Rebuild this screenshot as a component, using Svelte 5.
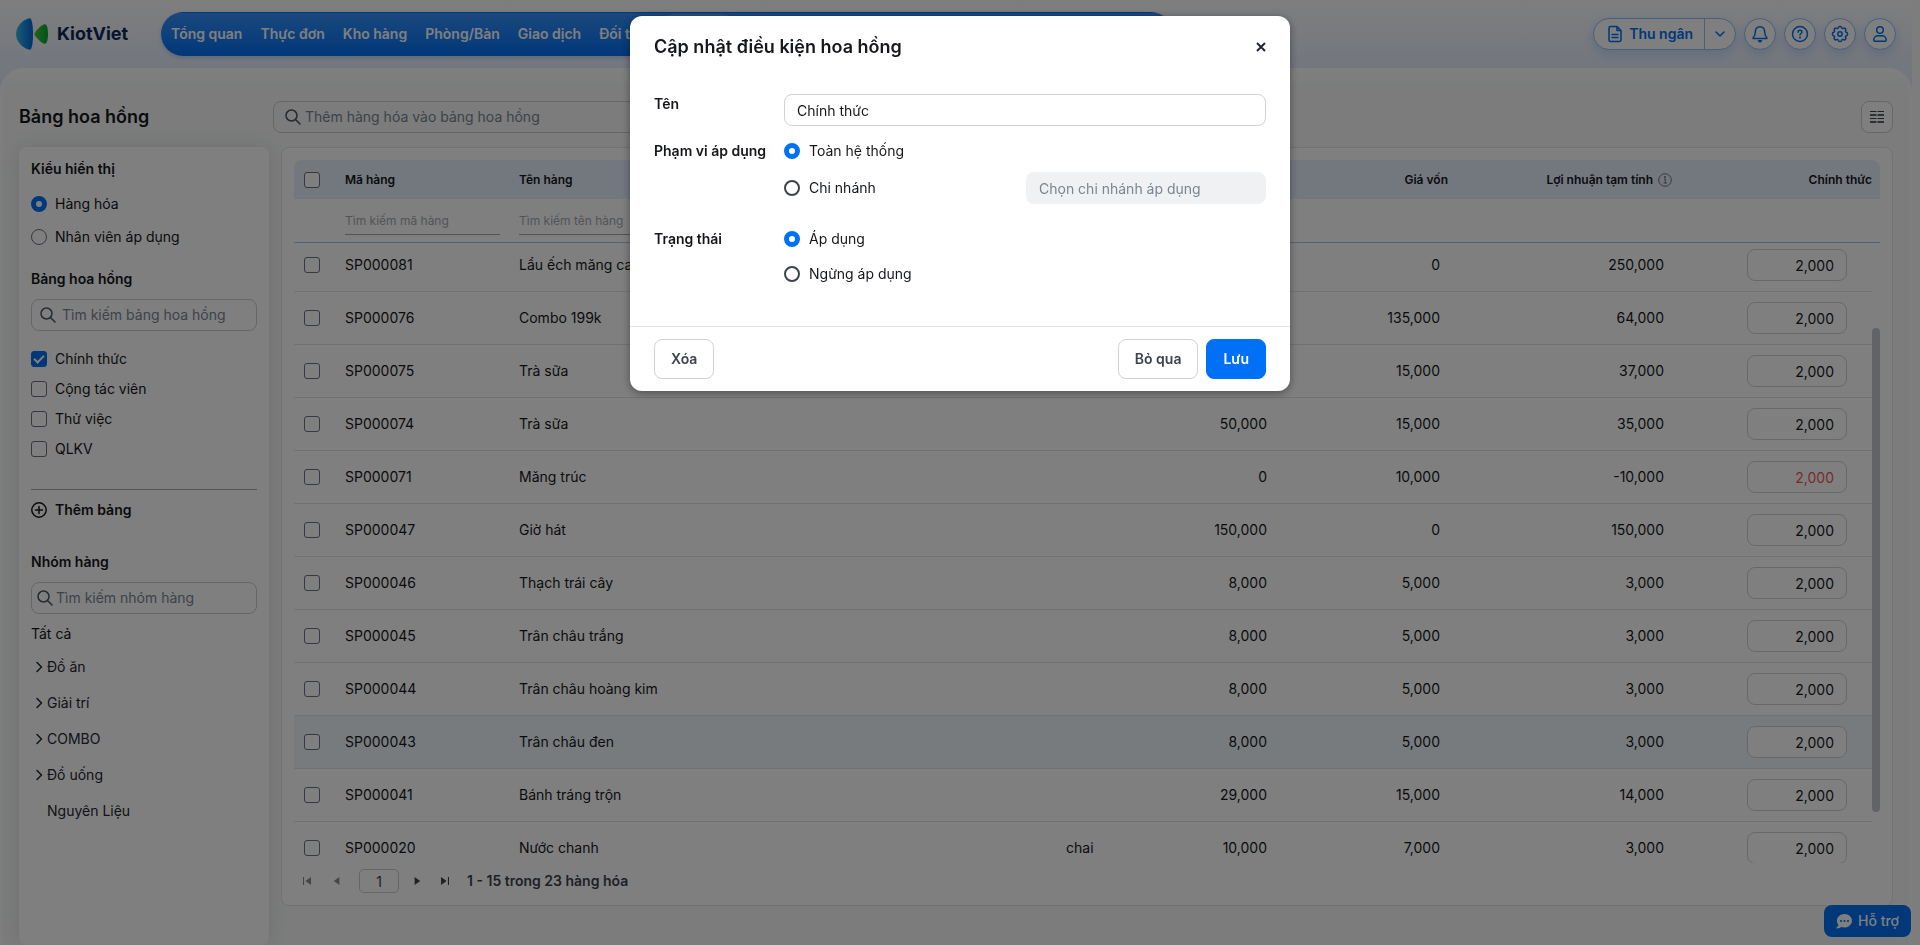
<script>
  let view = "product";
  let name = "Chính thức";
  let scope = "all";
  let status = "active";

  const menu = ["Tổng quan", "Thực đơn", "Kho hàng", "Phòng/Bàn", "Giao dịch", "Đối tác", "Nhân viên"];
  const current = "Nhân viên";

  let boards = [
    { name: "Chính thức", checked: true },
    { name: "Cộng tác viên", checked: false },
    { name: "Thử việc", checked: false },
    { name: "QLKV", checked: false },
  ];

  const groups = [
    { name: "Đồ ăn", nested: true },
    { name: "Giải trí", nested: true },
    { name: "COMBO", nested: true },
    { name: "Đồ uống", nested: true },
    { name: "Nguyên Liệu", nested: false },
  ];

  const products = [
    { code: "SP000081", name: "Lẩu ếch măng cay", unit: "", price: 250000, cost: 0 },
    { code: "SP000076", name: "Combo 199k", unit: "", price: 199000, cost: 135000 },
    { code: "SP000075", name: "Trà sữa", unit: "", price: 52000, cost: 15000 },
    { code: "SP000074", name: "Trà sữa", unit: "", price: 50000, cost: 15000 },
    { code: "SP000071", name: "Măng trúc", unit: "", price: 0, cost: 10000 },
    { code: "SP000047", name: "Giờ hát", unit: "", price: 150000, cost: 0 },
    { code: "SP000046", name: "Thạch trái cây", unit: "", price: 8000, cost: 5000 },
    { code: "SP000045", name: "Trân châu trắng", unit: "", price: 8000, cost: 5000 },
    { code: "SP000044", name: "Trân châu hoàng kim", unit: "", price: 8000, cost: 5000 },
    { code: "SP000043", name: "Trân châu đen", unit: "", price: 8000, cost: 5000 },
    { code: "SP000041", name: "Bánh tráng trộn", unit: "", price: 29000, cost: 15000 },
    { code: "SP000020", name: "Nước chanh", unit: "chai", price: 10000, cost: 7000 },
  ];
  const hovered = "SP000043";

  const money = (n) => n.toLocaleString("en-US");
</script>

<div class="page">
  <header>
    <a class="logo" href="#home">
      <svg width="32" height="32" viewBox="0 0 32 32" aria-hidden="true">
        <defs>
          <linearGradient id="blue" x1="0" x2="1" y1="0" y2="0">
            <stop offset="0" stop-color="#35b8e8" />
            <stop offset="1" stop-color="#0066dd" />
          </linearGradient>
          <linearGradient id="green" x1="0" x2="1" y1="0" y2="0">
            <stop offset="0" stop-color="#4fc52c" />
            <stop offset="1" stop-color="#00a53c" />
          </linearGradient>
        </defs>
        <path d="M14 0.2C15.6 0.4 17 6 17 16s-1.400 15.600-3 15.800C8 31 0 24.500 0 16S8 1 14 .2z" fill="url(#blue)" />
        <path d="M18.800 14.800C21 11.500 25 7.500 28.500 6.300 31 5.600 32 11 32 16s-1 10.400-3.500 9.700C25 24.500 21 20.500 18.800 17.200a2 2 0 0 1 0-2.400z" fill="url(#green)" />
      </svg>
      <span>KiotViet</span>
    </a>

    <nav>
      {#each menu as item}
        <a href="#menu" class:active={item === current}>{item}</a>
      {/each}
    </nav>

    <div class="actions">
      <div class="cashier">
        <button class="cashier-main">
          <svg width="16" height="18" viewBox="0 0 16 18" class="line" aria-hidden="true">
            <path d="M10 1.500H3.500A1.500 1.500 0 0 0 2 3v12a1.500 1.500 0 0 0 1.500 1.500h9A1.500 1.500 0 0 0 14 15V5.500zM10 1.500v4h4M5 9.500h6M5 12.500h6" />
          </svg>
          Thu ngân
        </button>
        <button class="cashier-more" aria-label="Mở thêm">
          <svg width="12" height="12" viewBox="0 0 12 12" class="line" aria-hidden="true"><path d="M2 4l4 4 4-4" /></svg>
        </button>
      </div>
      <button class="round" aria-label="Thông báo">
        <svg width="18" height="18" viewBox="0 0 18 18" class="line" aria-hidden="true">
          <path d="M9 1.700c-2.900 0-4.600 2.100-4.600 4.600 0 3.700-1 5.200-2.200 6.400-.3.400 0 .9.500.9h12.600c.5 0 .8-.5.500-.9-1.200-1.200-2.200-2.700-2.200-6.400C13.600 3.800 11.900 1.700 9 1.700z" />
          <path d="M7.500 15.800h3L9 16.800z" />
        </svg>
      </button>
      <button class="round" aria-label="Trợ giúp">
        <svg width="18" height="18" viewBox="0 0 18 18" class="line" aria-hidden="true">
          <circle cx="9" cy="9" r="7.500" />
          <path d="M7 7.200c0-1.200.9-2 2-2s2 .8 2 1.800c0 1.500-2 1.500-2 3" />
          <circle cx="9" cy="12.600" r=".4" />
        </svg>
      </button>
      <button class="round" aria-label="Thiết lập">
        <svg width="18" height="18" viewBox="0 0 18 18" class="line" aria-hidden="true">
          <path d="M7.300 2.600c.2-.7.7-1.100 1.300-1.100h.8c.6 0 1.100.4 1.300 1.100.2.800 1.100 1.200 1.800.8.600-.4 1.300-.3 1.700.1l.3.300c.4.400.5 1.100.1 1.700-.4.700 0 1.600.8 1.800.7.200 1.100.7 1.100 1.300v.8c0 .6-.4 1.100-1.100 1.300-.8.200-1.200 1.100-.8 1.800.4.600.3 1.300-.1 1.700l-.3.300c-.4.400-1.100.5-1.700.1-.7-.4-1.600 0-1.800.8-.2.700-.7 1.100-1.300 1.100h-.8c-.6 0-1.100-.4-1.300-1.100-.2-.8-1.100-1.200-1.800-.8-.6.400-1.300.3-1.700-.1l-.3-.3c-.4-.4-.5-1.100-.1-1.700.4-.7 0-1.600-.8-1.800-.7-.2-1.100-.7-1.100-1.300v-.8c0-.6.4-1.100 1.100-1.300.8-.2 1.200-1.100.8-1.800-.4-.6-.3-1.300.1-1.700l.3-.3c.4-.4 1.100-.5 1.700-.1.700.4 1.600 0 1.800-.8z" />
          <circle cx="9" cy="9" r="2.200" />
        </svg>
      </button>
      <button class="round" aria-label="Tài khoản">
        <svg width="18" height="18" viewBox="0 0 18 18" class="line" aria-hidden="true">
          <circle cx="9" cy="5" r="3.300" />
          <path d="M2.800 15c0-2.800 2.200-4.200 4.200-4.200h4c2 0 4.200 1.400 4.200 4.200 0 .8-.5 1.200-1.200 1.200H4c-.7 0-1.200-.4-1.200-1.200z" />
        </svg>
      </button>
    </div>
  </header>

  <main>
    <div class="toolbar">
      <h1>Bảng hoa hồng</h1>
      <div class="field search-product">
        <svg width="16" height="16" viewBox="0 0 16 16" class="line" aria-hidden="true"><circle cx="6.500" cy="6.500" r="5.500" /><path d="M10.500 10.500L15 15" /></svg>
        <input type="text" placeholder="Thêm hàng hóa vào bảng hoa hồng" aria-label="Thêm hàng hóa" />
      </div>
      <button class="columns" aria-label="Chọn cột">
        <svg width="16" height="14" viewBox="0 0 16 14" aria-hidden="true">
          <path d="M1 1.500h6.500M8.500 1.500H15M1 8.500h6.500M8.500 8.500H15" stroke="#3d434d" stroke-width="1.200" />
          <path d="M1 5h6.500M8.500 5H15M1 12h6.500M8.500 12H15" stroke="#5c626c" stroke-width="2" />
        </svg>
      </button>
    </div>

    <div class="content">
      <aside>
        <h2>Kiểu hiển thị</h2>
        <div class="views">
          <label><input type="radio" name="view" value="product" bind:group={view} />Hàng hóa</label>
          <label><input type="radio" name="view" value="staff" bind:group={view} />Nhân viên áp dụng</label>
        </div>

        <h2>Bảng hoa hồng</h2>
        <div class="field board-search">
          <svg width="16" height="16" viewBox="0 0 16 16" class="line" aria-hidden="true"><circle cx="6.500" cy="6.500" r="5.500" /><path d="M10.500 10.500L15 15" /></svg>
          <input type="text" placeholder="Tìm kiếm bảng hoa hồng" aria-label="Tìm kiếm bảng hoa hồng" />
        </div>
        <div class="boards">
          {#each boards as board}
            <label><input type="checkbox" bind:checked={board.checked} />{board.name}</label>
          {/each}
        </div>
        <button class="add">
          <svg width="16" height="16" viewBox="0 0 16 16" class="line" aria-hidden="true"><circle cx="8" cy="8" r="7.200" /><path d="M8 4.500v7M4.500 8h7" /></svg>
          Thêm bảng
        </button>

        <h2>Nhóm hàng</h2>
        <div class="field group-search">
          <svg width="16" height="16" viewBox="0 0 16 16" class="line" aria-hidden="true"><circle cx="6.500" cy="6.500" r="5.500" /><path d="M10.500 10.500L15 15" /></svg>
          <input type="text" placeholder="Tìm kiếm nhóm hàng" aria-label="Tìm kiếm nhóm hàng" />
        </div>
        <a class="all" href="#all">Tất cả</a>
        <ul>
          {#each groups as group}
            <li>
              {#if group.nested}
                <svg width="8" height="12" viewBox="0 0 8 12" class="line" aria-hidden="true"><path d="M2 1.500L6.500 6 2 10.500" /></svg>
              {/if}
              <a href="#group">{group.name}</a>
            </li>
          {/each}
        </ul>
      </aside>

      <section>
        <table class="head">
          <colgroup>
            <col class="c-check" /><col class="c-code" /><col /><col class="c-unit" /><col class="c-price" /><col class="c-cost" /><col class="c-profit" /><col class="c-rate" />
          </colgroup>
          <thead>
            <tr>
              <th class="check"><input type="checkbox" aria-label="Chọn tất cả" /></th>
              <th>Mã hàng</th>
              <th>Tên hàng</th>
              <th>ĐVT</th>
              <th class="num">Giá bán</th>
              <th class="num">Giá vốn</th>
              <th class="num">
                <span class="with-info">
                  Lợi nhuận tạm tính
                  <svg width="14" height="14" viewBox="0 0 14 14" aria-hidden="true">
                    <circle cx="7" cy="7" r="6.300" fill="none" stroke="#6b7280" />
                    <path d="M6 6h1.300v4M5.500 10h3.500M6.500 3.500h1v1h-1z" fill="none" stroke="#6b7280" />
                  </svg>
                </span>
              </th>
              <th class="num">Chính thức</th>
            </tr>
            <tr class="filters">
              <td></td>
              <td><input type="text" placeholder="Tìm kiếm mã hàng" aria-label="Tìm kiếm mã hàng" /></td>
              <td><input type="text" placeholder="Tìm kiếm tên hàng" aria-label="Tìm kiếm tên hàng" /></td>
              <td colspan="5"></td>
            </tr>
          </thead>
        </table>

        <div class="scroller">
          <div class="viewport">
            <table class="rows">
              <colgroup>
                <col class="c-check" /><col class="c-code" /><col /><col class="c-unit" /><col class="c-price" /><col class="c-cost" /><col class="c-profit" /><col class="c-rate-body" />
              </colgroup>
              <tbody>
                {#each products as p}
                  <tr class:hovered={p.code === hovered}>
                    <td class="check"><input type="checkbox" aria-label={p.code} /></td>
                    <td>{p.code}</td>
                    <td>{p.name}</td>
                    <td>{p.unit}</td>
                    <td class="num">{money(p.price)}</td>
                    <td class="num">{money(p.cost)}</td>
                    <td class="num">{money(p.price - p.cost)}</td>
                    <td class="rate"><input type="text" class:loss={p.price < p.cost} value="2,000" aria-label="Hoa hồng {p.code}" /></td>
                  </tr>
                {/each}
              </tbody>
            </table>
          </div>
          <div class="track"><div class="thumb"></div></div>
        </div>

        <div class="pager">
          <button disabled aria-label="Trang đầu"><svg width="8" height="8" viewBox="0 0 10 10"><path d="M0 0h1.300v10H0zM10 0v10L3 5z" /></svg></button>
          <button disabled aria-label="Trang trước"><svg width="8" height="8" viewBox="0 0 10 10"><path d="M8 0v10L1 5z" /></svg></button>
          <input type="text" value="1" aria-label="Trang" />
          <button aria-label="Trang sau"><svg width="8" height="8" viewBox="0 0 10 10"><path d="M2 0v10l7-5z" /></svg></button>
          <button aria-label="Trang cuối"><svg width="8" height="8" viewBox="0 0 10 10"><path d="M8.700 0H10v10H8.700zM0 0v10l7-5z" /></svg></button>
          <span>1 - 15 trong 23 hàng hóa</span>
        </div>
      </section>
    </div>
  </main>
</div>

<button class="support">
  <svg width="16" height="15" viewBox="0 0 16 15" aria-hidden="true">
    <path d="M8.300 0C4.200 0 .9 3 .9 6.700c0 1.700.7 3.200 1.700 4.400L0 14.300c2 .3 4-.2 5.200-1.300 1 .3 2 .5 3.100.5 4.200 0 7.700-3 7.700-6.800S12.500 0 8.300 0z" fill="#fff" />
    <g fill="#0070f4"><circle cx="5" cy="7" r="1.100" /><circle cx="8.500" cy="7" r="1.100" /><circle cx="12" cy="7" r="1.100" /></g>
  </svg>
  Hỗ trợ
</button>

<div class="overlay">
  <div class="modal" role="dialog" aria-modal="true" aria-labelledby="modal-title">
    <div class="modal-head">
      <h3 id="modal-title">Cập nhật điều kiện hoa hồng</h3>
      <button aria-label="Đóng">
        <svg width="10" height="10" viewBox="0 0 10 10" aria-hidden="true"><path d="M1 1l8 8M9 1L1 9" stroke="#22272f" stroke-width="2" /></svg>
      </button>
    </div>

    <div class="form">
      <div class="form-row">
        <label class="caption" for="board-name">Tên</label>
        <input id="board-name" type="text" bind:value={name} />
      </div>
      <div class="form-row scope" role="radiogroup" aria-labelledby="scope-label">
        <span class="caption" id="scope-label">Phạm vi áp dụng</span>
        <div class="options">
          <label><input type="radio" name="scope" value="all" bind:group={scope} />Toàn hệ thống</label>
          <div class="branch">
            <label><input type="radio" name="scope" value="branch" bind:group={scope} />Chi nhánh</label>
            <input type="text" placeholder="Chọn chi nhánh áp dụng" aria-label="Chi nhánh áp dụng" disabled={scope === "all"} />
          </div>
        </div>
      </div>
      <div class="form-row status" role="radiogroup" aria-labelledby="status-label">
        <span class="caption" id="status-label">Trạng thái</span>
        <div class="options">
          <label><input type="radio" name="status" value="active" bind:group={status} />Áp dụng</label>
          <label><input type="radio" name="status" value="stopped" bind:group={status} />Ngừng áp dụng</label>
        </div>
      </div>
    </div>

    <div class="modal-foot">
      <button>Xóa</button>
      <div>
        <button>Bỏ qua</button>
        <button class="primary">Lưu</button>
      </div>
    </div>
  </div>
</div>

<style>
  :global(body) {
    background: #f8faf8;
    color: #15171a;
    font: 14px/20px Inter, sans-serif;
    overflow: hidden;
  }
  :global(*) {
    box-sizing: border-box;
  }
  button,
  input {
    font: inherit;
    color: inherit;
  }
  button {
    cursor: pointer;
    padding: 0;
    border: 0;
    background: none;
    display: flex;
    align-items: center;
    justify-content: center;
  }
  a {
    color: inherit;
    text-decoration: none;
  }
  h1,
  h2,
  h3,
  ul {
    margin: 0;
    padding: 0;
  }
  .line {
    fill: none;
    stroke: currentColor;
    stroke-width: 1.5;
    stroke-linecap: round;
    stroke-linejoin: round;
    flex: none;
  }

  .page {
    height: 100vh;
    margin-right: 8px;
    display: flex;
    flex-direction: column;
    background: linear-gradient(#fdfdfd, #e6eefc 68px, #e2ecfc 92px);
  }

  header {
    height: 68px;
    flex: none;
    display: flex;
    align-items: center;
    padding: 0 16px;
  }
  .logo {
    width: 145px;
    display: flex;
    align-items: center;
    gap: 9px;
    font-size: 18px;
    font-weight: 700;
    color: #0a2a5c;
  }
  nav {
    height: 44px;
    width: 1012px;
    display: flex;
    align-items: center;
    padding: 0 1px;
    border-radius: 22px;
    background: linear-gradient(#0070f4 1px, #3690fa 1px, #0070f4);
    color: #fff;
    font-weight: 600;
    box-shadow: 0 2px 4px rgba(0, 80, 180, 0.2);
  }
  nav a {
    padding: 10px 9px;
    border-radius: 20px;
    white-space: nowrap;
  }
  nav .active {
    background: rgba(255, 255, 255, 0.15);
  }

  .actions {
    margin-left: auto;
    display: flex;
    gap: 8px;
    color: #0070f4;
  }
  .cashier,
  .round {
    height: 32px;
    border: 1px solid #8fc0fb;
    border-radius: 16px;
    background: #fff;
    box-shadow: 0 4px 12px rgba(0, 112, 244, 0.2);
  }
  .cashier {
    display: flex;
    font-weight: 600;
  }
  .cashier-main {
    gap: 6px;
    padding: 0 11px 0 13px;
  }
  .cashier-more {
    width: 31px;
    border-left: 1px solid #8fc0fb;
  }
  .round {
    width: 32px;
  }

  main {
    flex: 1;
    min-height: 0;
    display: flex;
    flex-direction: column;
    padding: 33px 16px 0;
    border: solid #fcfcfc;
    border-width: 0 3px;
    border-radius: 24px 24px 0 0;
    background: linear-gradient(#fff, #f6f9f7 20px);
  }
  .toolbar {
    display: flex;
    align-items: center;
    margin-bottom: 14px;
  }
  h1 {
    width: 254px;
    font-size: 18px;
    line-height: 24px;
    font-weight: 600;
  }
  .field {
    height: 32px;
    display: flex;
    align-items: center;
    border: 1px solid #c9ccd1;
    border-radius: 8px;
    background: #fff;
    color: #4b5563;
  }
  .field input {
    flex: 1;
    min-width: 0;
    border: 0;
    padding: 0;
    background: none;
  }
  input::placeholder {
    color: #7b8594;
    opacity: 1;
  }
  .search-product {
    width: 500px;
    padding: 0 11px;
    gap: 4px;
    background: none;
  }
  .columns {
    width: 32px;
    height: 32px;
    margin-left: auto;
    border: 1px solid #c9ccd1;
    border-radius: 8px;
    background: #fff;
  }

  .content {
    flex: 1;
    min-height: 0;
    display: flex;
    gap: 12px;
  }
  aside {
    width: 250px;
    flex: none;
    padding: 12px;
    border-radius: 8px;
    background: #fff;
    box-shadow: 0 0 20px rgba(0, 0, 0, 0.1);
  }
  h2 {
    font-size: 14px;
    line-height: 20px;
    font-weight: 600;
  }
  label {
    display: flex;
    align-items: center;
    gap: 8px;
  }

  input[type="radio"],
  input[type="checkbox"] {
    appearance: none;
    flex: none;
    width: 16px;
    height: 16px;
    margin: 0;
    border: 1px solid #6b7280;
    background: #fff;
  }
  input[type="radio"] {
    border-radius: 50%;
  }
  input[type="radio"]:checked {
    border: 5px solid #0070f4;
  }
  input[type="checkbox"] {
    border-radius: 3px;
  }
  input[type="checkbox"]:checked {
    border-color: #0070f4;
    background: #0070f4;
    display: grid;
    place-items: center;
  }
  input[type="checkbox"]:checked::before {
    content: "";
    width: 8px;
    height: 4px;
    border: solid #fff;
    border-width: 0 0 2px 2px;
    transform: translateY(-1px) rotate(-45deg);
  }

  .views {
    display: grid;
    gap: 13px;
    padding: 15px 0 22px;
  }
  .board-search {
    margin: 10px 0 18px;
    padding: 0 8px;
    gap: 6px;
  }
  .boards {
    display: grid;
    gap: 10px;
    padding-bottom: 30px;
    border-bottom: 1px solid #a5a8ad;
  }
  .add {
    gap: 8px;
    margin: 10px 0 32px;
    font-weight: 600;
  }
  .group-search {
    margin: 10px 0;
    padding: 0 5px;
    gap: 3px;
  }
  .all {
    display: block;
    margin-bottom: 5px;
  }
  li {
    height: 36px;
    display: flex;
    align-items: center;
    padding-left: 4px;
    color: #22272f;
  }
  li a {
    margin-left: auto;
    width: 210px;
  }

  section {
    flex: 1;
    min-width: 0;
    display: flex;
    flex-direction: column;
    margin-bottom: 39px;
    padding: 12px;
    border: 1px solid #e2e4e8;
    border-radius: 8px;
    background: #fff;
  }
  table {
    width: 100%;
    table-layout: fixed;
    border-collapse: separate;
    border-spacing: 0;
  }
  .c-check {
    width: 43px;
  }
  .c-code {
    width: 174px;
  }
  .c-unit {
    width: 50px;
  }
  .c-price {
    width: 175px;
  }
  .c-cost {
    width: 173px;
  }
  .c-profit {
    width: 224px;
  }
  .c-rate {
    width: 200px;
  }
  .c-rate-body {
    width: 192px;
  }
  th,
  td {
    padding: 0 8px;
    text-align: left;
    white-space: nowrap;
  }
  .num {
    text-align: right;
  }
  .check {
    padding: 0 0 0 10px;
  }
  .check input {
    display: block;
  }
  .head {
    border-bottom: 1px solid #a9c8f5;
  }
  th {
    height: 39px;
    font-size: 12px;
    font-weight: 600;
    background: #e6f0ff;
  }
  th:first-child {
    border-top-left-radius: 8px;
  }
  th:last-child {
    border-top-right-radius: 8px;
  }
  .with-info {
    display: inline-flex;
    align-items: center;
    gap: 5px;
  }
  .filters td {
    height: 43px;
    padding-right: 11px;
    font-size: 12px;
  }
  .filters input {
    width: 100%;
    height: 28px;
    border: 0;
    border-bottom: 1px solid #a5a8ad;
    padding: 0;
    background: none;
  }
  .filters input::placeholder {
    color: #a5a8ad;
  }

  .scroller {
    flex: 1;
    min-height: 0;
    display: flex;
  }
  .viewport {
    flex: 1;
    min-width: 0;
    overflow: hidden;
  }
  .rows {
    margin-top: -4px;
  }
  .rows td {
    height: 53px;
    border-bottom: 1px solid #e2e4e8;
  }
  .rows .num {
    padding-right: 16px;
  }
  .hovered td {
    background: #f0f7fd;
  }
  .rows .rate {
    padding-right: 25px;
  }
  .rate input {
    display: block;
    width: 100px;
    height: 32px;
    margin-left: auto;
    padding: 0 12px;
    border: 1px solid #cdd1d8;
    border-radius: 8px;
    background: #fff;
    text-align: right;
  }
  .rate .loss {
    color: #f0565f;
  }
  .track {
    width: 8px;
    padding-top: 85px;
  }
  .thumb {
    height: 484px;
    border-radius: 4px;
    background: #c4c7cf;
  }

  .pager {
    display: flex;
    align-items: center;
    gap: 8px;
    padding: 6px 3px 0;
    color: #3d434d;
    font-weight: 600;
  }
  .pager button {
    width: 20px;
    height: 24px;
    fill: currentColor;
  }
  .pager button:disabled {
    opacity: 0.6;
  }
  .pager button:disabled + input,
  .pager span {
    margin-left: 4px;
  }
  .pager input {
    width: 40px;
    height: 24px;
    padding: 0;
    border: 1px solid #c9ccd1;
    border-radius: 5px;
    text-align: center;
    font-weight: 400;
  }
  .pager button:disabled:not(:first-child) {
    margin-left: 2px;
  }

  .support {
    position: fixed;
    right: 9px;
    bottom: 8px;
    height: 32px;
    padding: 0 12px;
    gap: 6px;
    border-radius: 8px;
    background: #0070f4;
    color: #fff;
    font-weight: 500;
  }

  .overlay {
    position: fixed;
    inset: 0;
    display: flex;
    align-items: flex-start;
    justify-content: center;
    padding-top: 16px;
    background: rgba(0, 0, 0, 0.5);
  }
  .modal {
    width: 660px;
    border-radius: 12px;
    background: #fff;
    box-shadow: 0 2px 8px rgba(0, 0, 0, 0.4);
  }
  .modal-head {
    height: 62px;
    display: flex;
    align-items: center;
    justify-content: space-between;
    padding: 0 24px;
  }
  h3 {
    font-size: 18px;
    line-height: 24px;
    font-weight: 600;
  }
  .form {
    padding: 16px 24px 42px;
  }
  .form-row {
    display: flex;
  }
  .caption {
    width: 130px;
    flex: none;
    align-self: flex-start;
    font-weight: 600;
  }
  .form-row > input,
  .branch > input {
    height: 32px;
    padding: 0 12px;
    border: 1px solid #cdd1d8;
    border-radius: 8px;
  }
  .form-row > input {
    flex: 1;
  }
  .scope {
    padding-top: 15px;
  }
  .status {
    padding-top: 25px;
  }
  .options {
    flex: 1;
  }
  .status .options {
    display: grid;
    gap: 15px;
  }
  .modal label {
    gap: 9px;
  }
  .modal input[type="radio"]:not(:checked) {
    border: 2px solid #3d434d;
  }
  .branch {
    display: flex;
    justify-content: space-between;
    padding-top: 11px;
  }
  .branch > input {
    width: 240px;
  }
  .branch > input:disabled {
    border-color: #eff1f3;
    background: #eff1f3;
  }
  .modal-foot {
    display: flex;
    justify-content: space-between;
    padding: 12px 24px;
    border-top: 1px solid #e2e4e8;
  }
  .modal-foot div {
    display: flex;
    gap: 8px;
  }
  .modal-foot button {
    height: 40px;
    padding: 0 16px;
    border: 1px solid #cdd1d8;
    border-radius: 8px;
    color: #3d434d;
    font-weight: 600;
  }
  .modal-foot .primary {
    border-color: #0070f4;
    background: #0070f4;
    color: #fff;
  }
</style>
